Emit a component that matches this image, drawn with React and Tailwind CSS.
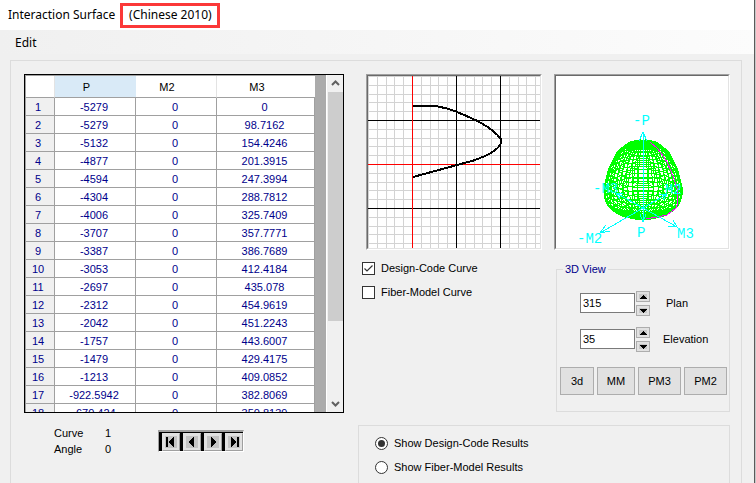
import React from "react";

const ROWS = [
  ["-5279", "0", "0"],
  ["-5279", "0", "98.7162"],
  ["-5132", "0", "154.4246"],
  ["-4877", "0", "201.3915"],
  ["-4594", "0", "247.3994"],
  ["-4304", "0", "288.7812"],
  ["-4006", "0", "325.7409"],
  ["-3707", "0", "357.7771"],
  ["-3387", "0", "386.7689"],
  ["-3053", "0", "412.4184"],
  ["-2697", "0", "435.078"],
  ["-2312", "0", "454.9619"],
  ["-2042", "0", "451.2243"],
  ["-1757", "0", "443.6007"],
  ["-1479", "0", "429.4175"],
  ["-1213", "0", "409.0852"],
  ["-922.5942", "0", "382.8069"],
  ["-670.424", "0", "350.8139"],
];

// Radius and height of each ring of the surface, in plot pixels
const PROFILE = [
  [0, 69], [6, 69], [12, 69], [17, 70], [21, 73], [24, 76], [27, 79], [29, 83],
  [31, 87], [33, 91], [35, 95], [36, 99], [37, 103], [38, 107], [39, 111],
  [39, 115], [39, 119], [38, 123], [36, 127], [33, 130], [29, 133], [24, 135],
  [19, 137], [13, 139], [6, 141], [0, 142],
];

const TILT = 0.35;

const project = ([r, y], a) =>
  `${(87 + r * Math.cos(a)).toFixed(1)},${(y + r * TILT * Math.sin(a)).toFixed(1)}`;

const angles = (n) => Array.from({ length: n }, (_, i) => (i * 2 * Math.PI) / n);
const MERIDIANS = angles(44).map((a) => PROFILE.map((p) => project(p, a)).join(" "));
const PARALLELS = PROFILE.map((p) => angles(44).map((a) => project(p, a)).join(" "));

const GRID = Array.from({ length: 20 }, (_, i) => Math.floor(i * 8.8 + 0.4)).filter((v) => v < 172);

function Sunken({ children }) {
  return (
    <div className="border border-t-[#a0a0a0] border-l-[#a0a0a0] border-r-white border-b-white">
      <div className="border border-t-[#696969] border-l-[#696969] border-r-[#e3e3e3] border-b-[#e3e3e3] bg-white">
        {children}
      </div>
    </div>
  );
}

function CurvePlot() {
  return (
    <Sunken>
      <svg width="172" height="172" className="block" shapeRendering="crispEdges" fill="none">
        {GRID.map((v) => (
          <path key={v} d={`M${v + 0.5} 0V172M0 ${v + 0.5}H172`} stroke="#d3d3d3" />
        ))}
        <path d="M88.5 0V172M132.5 0V172M0 44.5H172M0 132.5H172" stroke="#000" />
        <path d="M44.5 0V172M0 88.5H172" stroke="#f00" />
        <path
          d="M45 30H67C73 31 82 33 89 36C104 42 123 50 133 63V67C130 75 116 81 104 85L89 89L45 101"
          stroke="#000"
          strokeWidth="2"
        />
      </svg>
    </Sunken>
  );
}

function SurfacePlot() {
  return (
    <Sunken>
      <svg width="172" height="172" className="block" fill="none" shapeRendering="crispEdges">
        <g stroke="#0f0">
          {MERIDIANS.map((p, i) => (
            <polyline key={`m${i}`} points={p} />
          ))}
          {PARALLELS.map((p, i) => (
            <polygon key={`p${i}`} points={p} />
          ))}
        </g>
        <path
          d="M94 66L102 73L108 81L112 88L117 100L121 112L122 126L120 132L111 139L101 141L90 143"
          stroke="#f0f"
        />
        <g stroke="#0ff">
          <path d="M87 56V146M83 65L87 56L91 65M84 138L87 146L90 138" />
          <path d="M87 132L44 157M50 149L44 157L54 155" />
          <path d="M87 132L121 151M117 144L121 151L112 150" />
          <path d="M87 132L60 117M64 123L60 117L67 118" />
          <path d="M87 132L111 118M103 118L111 118L107 124" />
        </g>
        <g
          fill="#0ff"
          shapeRendering="auto"
          className="font-['Liberation_Mono',monospace] text-[14px]"
        >
          <text x="77" y="49">-P</text>
          <text x="81" y="161">P</text>
          <text x="21" y="167">-M2</text>
          <text x="121" y="162">M3</text>
          <text x="37" y="117">-M3</text>
          <text x="109" y="118">M2</text>
        </g>
      </svg>
    </Sunken>
  );
}

function Check({ label, checked }) {
  return (
    <label className="flex h-6 items-center gap-1.5">
      <span className="grid">
        <input
          type="checkbox"
          defaultChecked={checked}
          className="peer col-start-1 row-start-1 size-[13px] appearance-none border border-[#333] bg-white"
        />
        <svg
          viewBox="0 0 13 13"
          className="pointer-events-none invisible col-start-1 row-start-1 size-[13px] peer-checked:visible"
        >
          <path d="M2.5 6.5L5 9L10.5 3.5" fill="none" stroke="#333" strokeWidth="1.2" />
        </svg>
      </span>
      {label}
    </label>
  );
}

function Choice({ label, checked }) {
  return (
    <label className="flex h-6 items-center gap-1.5">
      <span className="grid place-items-center">
        <input
          type="radio"
          name="results"
          defaultChecked={checked}
          className="peer col-start-1 row-start-1 size-[13px] appearance-none rounded-full border border-[#333] bg-white"
        />
        <span className="pointer-events-none invisible col-start-1 row-start-1 size-[7px] rounded-full bg-[#333] peer-checked:visible" />
      </span>
      {label}
    </label>
  );
}

function SpinButton({ up, label }) {
  return (
    <button
      aria-label={label}
      className="flex h-[11px] w-[14px] items-center justify-center border border-[#adadad] bg-[#e1e1e1]"
    >
      <svg width="8" height="5" className="block" shapeRendering="crispEdges">
        <rect width="8" height="5" fill="#c8c8c8" />
        <path d={up ? "M4 1L8 5H0Z" : "M0 1H8L4 5Z"} fill="#000" />
      </svg>
    </button>
  );
}

function AngleRow({ id, label, value, labelClass }) {
  return (
    <div className="flex h-9 items-center pl-[23px]">
      <input
        id={id}
        type="text"
        defaultValue={value}
        className="h-5 w-[55px] border border-[#7a7a7a] bg-white px-0.5"
      />
      <div className="ml-px flex flex-col gap-[3px]">
        <SpinButton up label={`Increase ${label}`} />
        <SpinButton label={`Decrease ${label}`} />
      </div>
      <label htmlFor={id} className={labelClass}>
        {label}
      </label>
    </div>
  );
}

const NAV = [
  ["First", "M3 4H5V14H3ZM6 9L12 3V15Z"],
  ["Previous", "M5 9L11 3V15Z"],
  ["Next", "M12 9L6 3V15Z"],
  ["Last", "M11 9L5 3V15ZM12 4H14V14H12Z"],
];

const VIEW_BUTTON = "h-7 border border-[#adadad] bg-[#e1e1e1]";
const HEAD = "h-[22px] border-b border-[#a0a0a0] pr-[18px] font-normal text-black";
const CELL = "h-[18px] border-r border-b border-[#a0a0a0] bg-white p-0 pr-0.5 text-center";

export default function App() {
  return (
    <div className="flex h-screen overflow-hidden bg-[#f0f0f0] font-['Liberation_Sans',Arial,sans-serif] text-[11px] leading-4 text-black">
      <div className="flex min-w-0 flex-1 flex-col">
        <header className="flex h-[30px] shrink-0 items-center bg-white pl-2 font-['Noto_Sans','Open_Sans',sans-serif] text-[12px]">
          <h1>Interaction Surface</h1>
          <span className="ml-[5px] flex h-[25px] w-[100px] items-center justify-center border-3 border-[#fb3838]">
            (Chinese 2010)
          </span>
        </header>
        <nav className="flex h-6 shrink-0 items-center bg-linear-to-r from-[#f0f0f0] to-[#fcfcfc] pt-0.5 pl-[15px] font-['Noto_Sans','Open_Sans',sans-serif] text-[12px]">
          <button>Edit</button>
        </nav>

        <main className="mt-1.5 mr-3 ml-2.5 flex flex-1 gap-3.5 border border-b-0 border-[#dcdcdc] pt-[13px] pr-[11px] pl-[13px]">
          <section className="w-80 shrink-0">
            <div className="flex h-[339px] overflow-hidden border border-black bg-[#ababab]">
              <div className="min-w-0 flex-1 border-t border-l border-[#a0a0a0]">
                <table className="w-[289px] table-fixed border-separate border-spacing-0 text-[#00008b]">
                  <colgroup>
                    <col className="w-[29px]" />
                    <col className="w-[81px]" />
                    <col className="w-[81px]" />
                    <col className="w-[98px]" />
                  </colgroup>
                  <thead>
                    <tr>
                      <th className={`${HEAD} border-r border-r-[#e3e3e3] bg-white`} aria-label="Row" />
                      <th className={`${HEAD} bg-[#d9eaf7]`}>P</th>
                      <th className={`${HEAD} border-r border-r-[#e3e3e3] bg-white`}>M2</th>
                      <th className={`${HEAD} bg-white`}>M3</th>
                    </tr>
                  </thead>
                  <tbody>
                    {ROWS.map((row, i) => (
                      <tr key={i}>
                        <th className="h-[18px] border-r border-b border-[#a0a0a0] bg-[#f0f0f0] p-0 pr-1 font-normal">
                          {i + 1}
                        </th>
                        {row.map((value, j) => (
                          <td key={j} className={CELL}>
                            {value}
                          </td>
                        ))}
                      </tr>
                    ))}
                  </tbody>
                </table>
              </div>
              <div className="flex w-[17px] flex-col items-center justify-between border-l border-white bg-[#f0f0f0]">
                <svg width="15" height="17" className="block shrink-0">
                  <path d="M4 10L7.5 6.5L11 10" fill="none" stroke="#606060" strokeWidth="2" />
                </svg>
                <div className="h-[229px] w-[15px] bg-[#cdcdcd]" />
                <div className="flex-1" />
                <svg width="15" height="17" className="block shrink-0">
                  <path d="M4 7L7.5 10.5L11 7" fill="none" stroke="#606060" strokeWidth="2" />
                </svg>
              </div>
            </div>

            <div className="flex items-start pt-3 pl-[30px]">
              <dl className="grid w-[104px] grid-cols-[51px_auto]">
                <dt>Curve</dt>
                <dd>1</dd>
                <dt>Angle</dt>
                <dd>0</dd>
              </dl>
              <div className="mt-[5px] flex h-[22px] gap-[3px] border border-t-2 border-[#a0a0a0] border-r-white border-b-white bg-black pt-px pl-[3px]">
                {NAV.map(([name, shape]) => (
                  <button
                    key={name}
                    aria-label={`${name} curve`}
                    className="border border-[#e1e1e1] border-r-[#a0a0a0] border-b-[#a0a0a0] bg-[#e1e1e1]"
                  >
                    <svg width="16" height="16" viewBox="0 1 17 16" shapeRendering="crispEdges" className="block">
                      <rect x="2" y="3" width="13" height="12" fill="#c3c3c3" />
                      <path d={shape} fill="#000" />
                    </svg>
                  </button>
                ))}
              </div>
            </div>
          </section>

          <section className="flex min-w-0 flex-1 flex-col">
            <div className="flex flex-1 justify-between pl-2">
              <div>
                <CurvePlot />
                <div className="-ml-1 pt-1.5">
                  <Check label="Design-Code Curve" checked />
                  <Check label="Fiber-Model Curve" />
                </div>
              </div>
              <div className="flex w-44 flex-col">
                <SurfacePlot />
                <fieldset className="mt-[11px] ml-0.5 h-[151px] border border-[#dcdcdc]">
                  <legend className="ml-1.5 px-0.5 text-[#00008b]">3D View</legend>
                  <div className="pt-2">
                    <AngleRow id="plan" label="Plan" value="315" labelClass="ml-4" />
                    <AngleRow id="elevation" label="Elevation" value="35" labelClass="ml-[13px]" />
                  </div>
                  <div className="flex gap-[3px] pt-2.5 pl-[3px]">
                    <button className={`${VIEW_BUTTON} w-[34px]`}>3d</button>
                    <button className={`${VIEW_BUTTON} w-[38px]`}>MM</button>
                    <button className={`${VIEW_BUTTON} w-[43px]`}>PM3</button>
                    <button className={`${VIEW_BUTTON} w-[43px]`}>PM2</button>
                  </div>
                </fieldset>
              </div>
            </div>
            <div className="h-[58px] shrink-0 border border-b-0 border-[#dcdcdc] pt-[5px] pl-4">
              <Choice label="Show Design-Code Results" checked />
              <Choice label="Show Fiber-Model Results" />
            </div>
          </section>
        </main>
      </div>
      <div className="w-0.5 shrink-0 border-l border-[#5a5a5a] bg-[#c8c8c8]" />
    </div>
  );
}
